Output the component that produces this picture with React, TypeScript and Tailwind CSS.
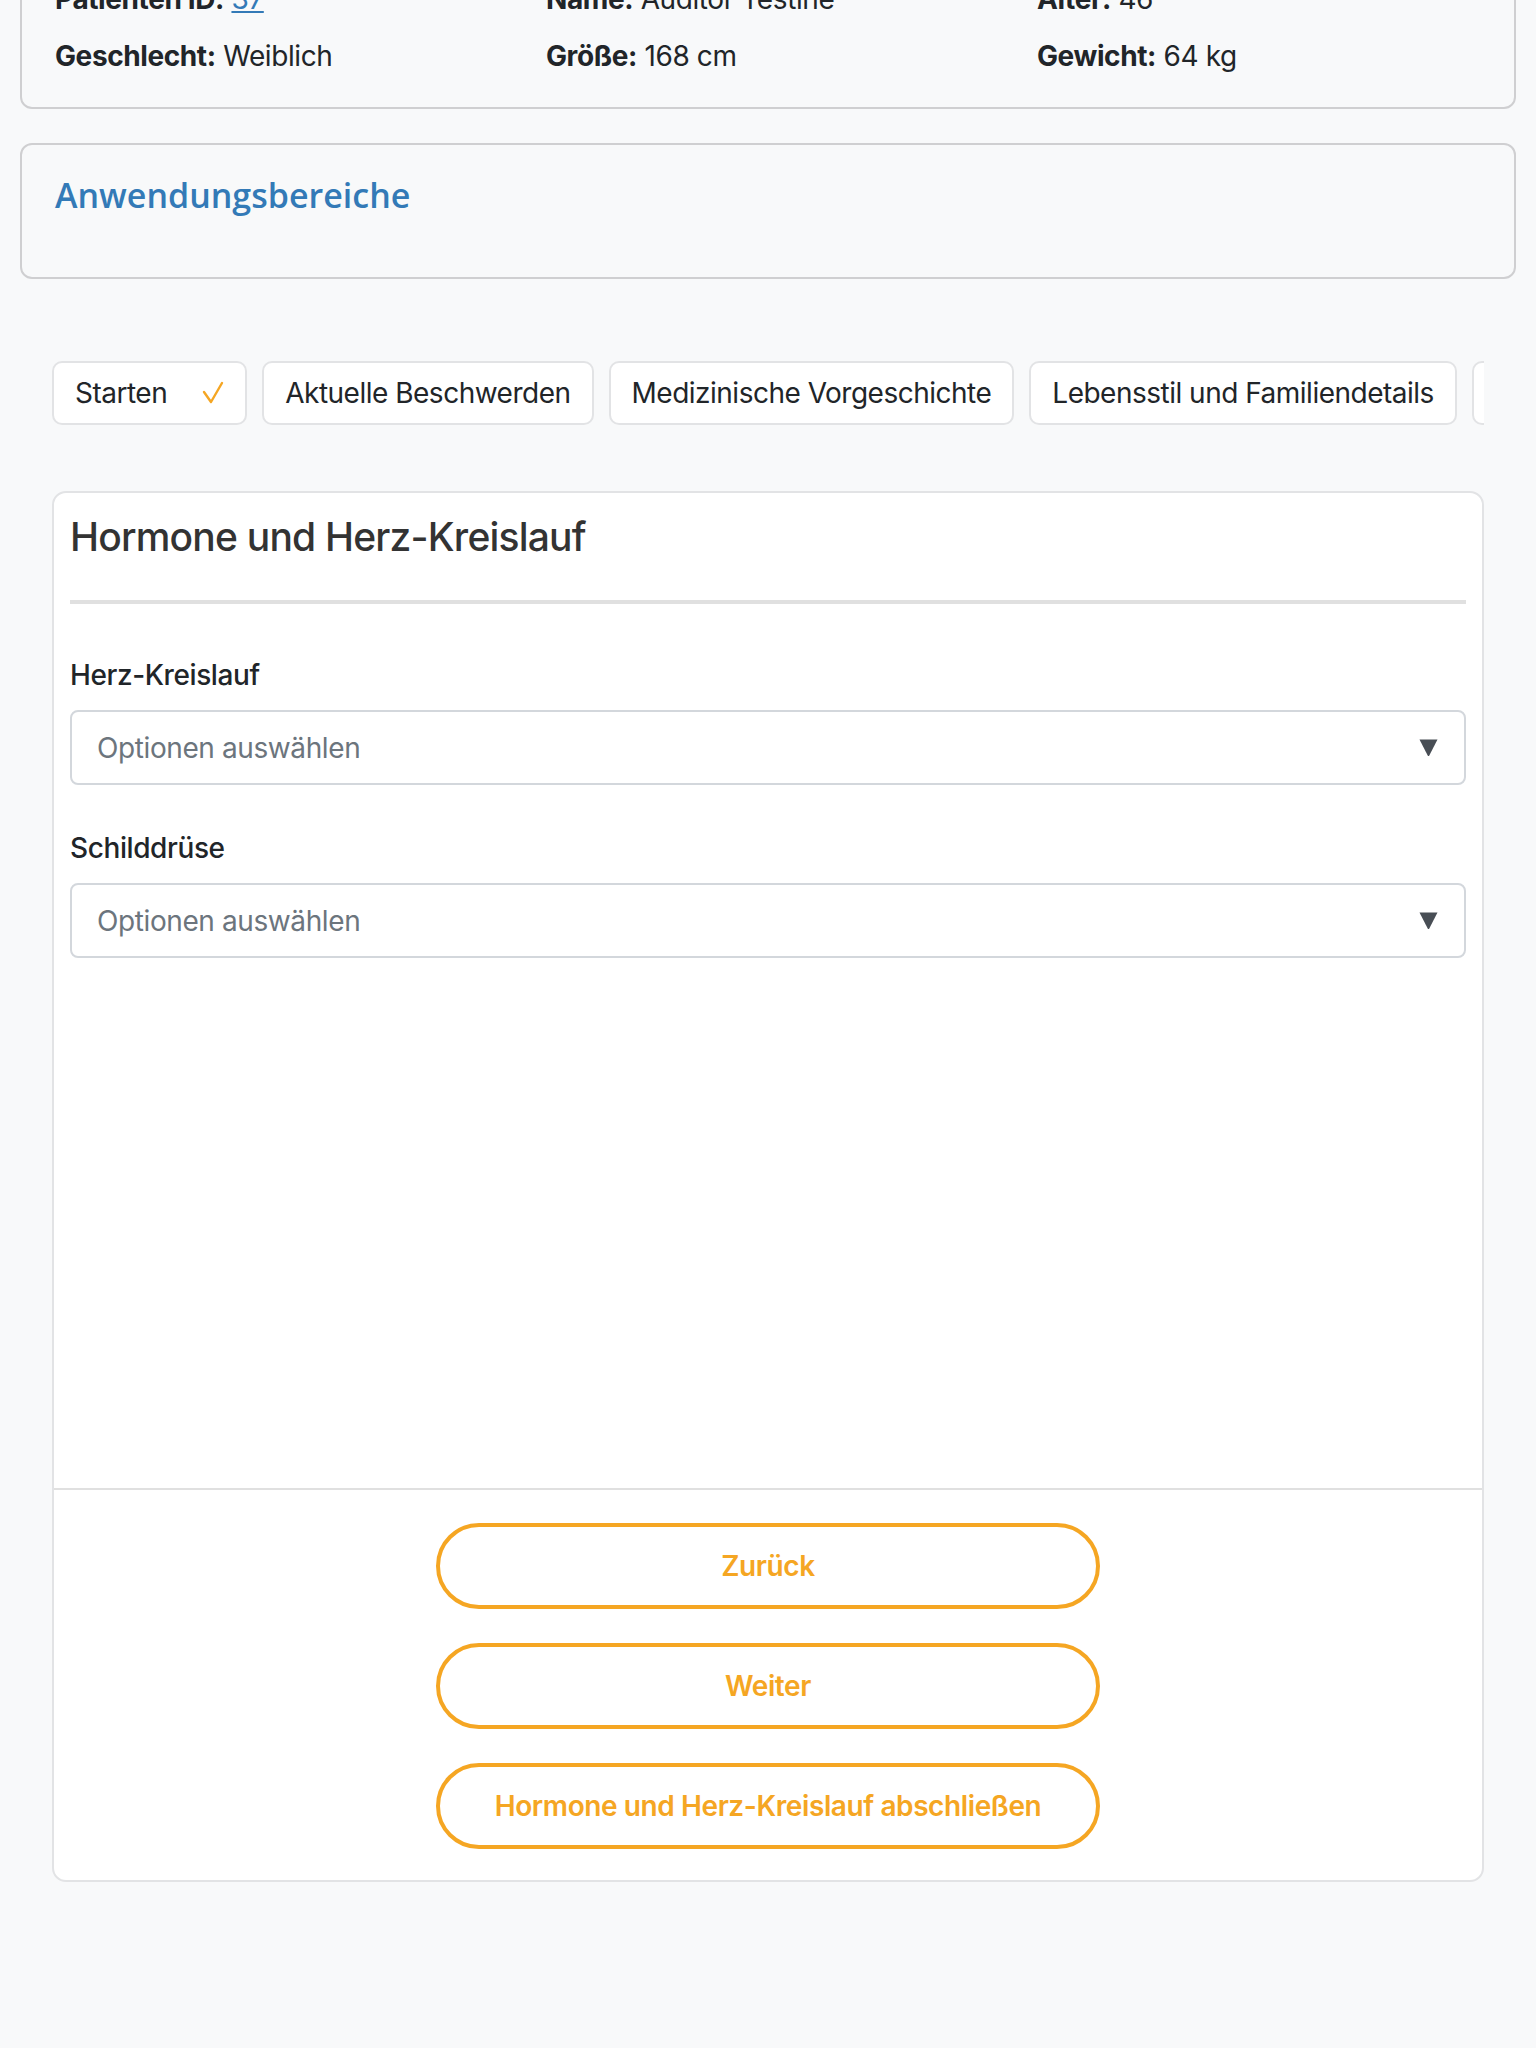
import React from "react";

const steps = [
  { label: "Starten", done: true },
  { label: "Aktuelle Beschwerden", done: false },
  { label: "Medizinische Vorgeschichte", done: false },
  { label: "Lebensstil und Familiendetails", done: false },
  { label: "Hormone und Herz-Kreislauf", done: false },
];

const fields = ["Herz-Kreislauf", "Schilddrüse"];

function Info(props: { label: string; children: React.ReactNode }) {
  return (
    <div className="leading-[36px]">
      <span className="font-bold">{props.label}:</span> {props.children}
    </div>
  );
}

function CheckMark() {
  return (
    <svg viewBox="0 0 22 24" className="w-[22px] h-[24px]" fill="none">
      <path d="M2 11 L9 21 L20 2" stroke="#f5a623" strokeWidth="2.4" strokeLinecap="round" strokeLinejoin="round" />
    </svg>
  );
}

function SelectBox() {
  return (
    <div className="flex items-center justify-between h-[75px] border-2 border-[#d3d7dc] rounded-[8px] bg-white pl-[25px] pr-[26px]">
      <span className="text-[#6c757d]">Optionen auswählen</span>
      <svg viewBox="0 0 19 19" className="w-[19px] h-[19px]">
        <path d="M0.5 1.5 L18.5 1.5 L10.3 17.4 Q9.5 18.6 8.7 17.4 Z" fill="#484e55" />
      </svg>
    </div>
  );
}

function PillButton(props: { children: React.ReactNode }) {
  return (
    <button className="w-[664px] h-[86px] rounded-full border-4 border-[#f5a623] bg-white text-[#f5a623] font-semibold">
      {props.children}
    </button>
  );
}

export default function App() {
  return (
    <div className="min-h-screen bg-[#f8f9fa] text-[#212529] text-[28px] font-['Inter','Liberation_Sans',sans-serif] tracking-[-0.4px] pb-[166px]">
      <div className="px-[20px]">
        <div className="-mt-[54px] border-2 border-[#cfcfd1] rounded-[12px] px-[33px] py-[33px]">
          <div className="grid grid-cols-3 gap-x-[47px] gap-y-[21px]">
            <Info label="Patienten ID">
              <a className="text-[#337ab7] underline">37</a>
            </Info>
            <Info label="Name">Auditor Testine</Info>
            <Info label="Alter">46</Info>
            <Info label="Geschlecht">Weiblich</Info>
            <Info label="Größe">168 cm</Info>
            <Info label="Gewicht">64 kg</Info>
          </div>
        </div>

        <div className="mt-[34px] h-[136px] border-2 border-[#cfcfd1] rounded-[12px] px-[33px] pt-[30px]">
          <h2 className="text-[34px] leading-[40px] font-semibold text-[#337ab7] font-['Open_Sans','Inter',sans-serif] tracking-[0px]">
            Anwendungsbereiche
          </h2>
        </div>
      </div>

      <div className="px-[52px]">
        <div className="mt-[82px] flex gap-[15px] overflow-hidden">
          {steps.map((s) => (
            <div
              key={s.label}
              className="shrink-0 flex items-center gap-[35px] h-[64px] px-[21px] border-2 border-[#e2e3e5] rounded-[10px] bg-white whitespace-nowrap tracking-[-0.5px]"
            >
              <span>{s.label}</span>
              {s.done && <CheckMark />}
            </div>
          ))}
        </div>

        <div className="mt-[66px] border-2 border-[#e2e3e5] rounded-[14px] bg-white">
          <div className="h-[995px] px-[16px] pt-[20px]">
            <h1 className="text-[39px] leading-[48px] font-medium text-[#333333] tracking-[-0.8px]">
              Hormone und Herz-Kreislauf
            </h1>
            <div className="mt-[39px] h-[4px] bg-[#e0e0e0]" />
            <div className="mt-[53px] flex flex-col gap-[45px]">
              {fields.map((f) => (
                <div key={f} className="flex flex-col gap-[17px]">
                  <label className="font-medium leading-[36px]">{f}</label>
                  <SelectBox />
                </div>
              ))}
            </div>
          </div>
          <div className="border-t-2 border-[#e0e0e0] flex flex-col items-center gap-[34px] pt-[33px] pb-[31px]">
            <PillButton>Zurück</PillButton>
            <PillButton>Weiter</PillButton>
            <PillButton>Hormone und Herz-Kreislauf abschließen</PillButton>
          </div>
        </div>
      </div>
    </div>
  );
}
